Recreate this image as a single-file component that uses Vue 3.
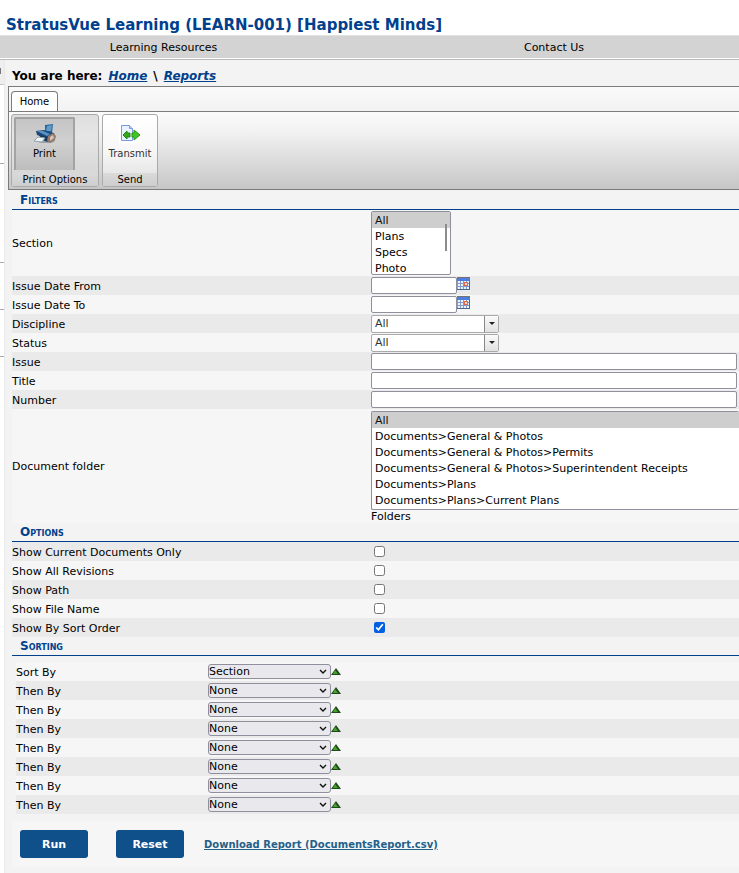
<template>
  <div class="page">
    <header class="top">
      <h1>StratusVue Learning (LEARN-001) [Happiest Minds]</h1>
    </header>
    <nav class="site-nav">
      <a href="#resources">Learning Resources</a>
      <a href="#contact">Contact Us</a>
    </nav>

    <div class="body">
      <aside class="side">
        <div class="side-head"></div>
        <div class="side-block first"></div>
        <div class="side-block second"></div>
        <div class="side-block third"></div>
        <div class="side-block fourth"></div>
      </aside>

      <main class="content">
        <div class="crumbs">
          <span>You are here:</span>
          <a href="#home">Home</a>
          <span>\</span>
          <a href="#reports">Reports</a>
        </div>

        <section class="ribbon">
          <div class="tabs">
            <button type="button" class="tab">Home</button>
          </div>
          <div class="groups">
            <div class="group print-group">
              <div class="group-body">
                <button type="button" class="tool active">
                  <svg width="24" height="22" viewBox="0 0 24 22" aria-hidden="true">
                    <ellipse cx="13" cy="18" rx="9" ry="2" fill="#9a9da1" />
                    <path d="M12 2 L20 1 L19 10 L12 9 Z" fill="#2a659f" />
                    <path d="M14 3 L19 2 L18 8 L13 8 Z" fill="#5f9bcb" />
                    <path d="M3 8 L11 7 L21 10 L22 13 L15 16 L4 12 Z" fill="#1d4a7a" />
                    <path d="M4 8 L10 8 L17 11 L14 13 Z" fill="#5b93c4" />
                    <path d="M6 12 L15 14 L15 19 L9 17 Z" fill="#16365c" />
                    <path d="M15 13 L20 10 L23 13 L22 17 L17 20 L14 18 Z" fill="#94796a" />
                    <path d="M17 14 L20 12 L21 15 L17 18 Z" fill="#d6c3b6" />
                    <path d="M5 14 L12 15 L9 19 L1 18 Z" fill="#edf7fa" stroke="#93a3ab" />
                  </svg>
                  <span>Print</span>
                </button>
              </div>
              <div class="group-title">Print Options</div>
            </div>
            <div class="group send-group">
              <div class="group-body">
                <button type="button" class="tool">
                  <svg width="24" height="22" viewBox="0 0 24 22" aria-hidden="true">
                    <rect x="1" y="0" width="22" height="21" fill="#fff" />
                    <path d="M3.5 2.5 H11.5 L14.5 5.5 V17.5 H3.5 Z" fill="#eaf1ff" stroke="#7a9ae0" />
                    <path d="M11.5 2.5 V5.5 H14.5" fill="#b7cbf5" stroke="#7a9ae0" />
                    <path d="M5 12 L9 8 V10 H12 V14 H9 V16 Z" fill="#35a81e" stroke="#1f8a12" />
                    <path d="M22 12 L16 7 V10 H14 V14 H16 V17 Z" fill="#45c428" stroke="#259516" />
                  </svg>
                  <span>Transmit</span>
                </button>
              </div>
              <div class="group-title">Send</div>
            </div>
          </div>
        </section>

        <form class="report" @submit.prevent @reset.prevent="resetForm">
          <h2>Filters</h2>
          <div class="row">
            <label for="section">Section</label>
            <div class="field list-field">
              <select id="section" v-model="form.section" class="list section-list" multiple size="4">
                <option v-for="s in sections" :key="s">{{ s }}</option>
              </select>
              <span class="thumb"></span>
            </div>
          </div>
          <div v-for="d in dates" :key="d.id" class="row">
            <label :for="d.id">{{ d.label }}</label>
            <div class="field">
              <input :id="d.id" v-model="form[d.id]" type="text" class="text date" />
              <button type="button" class="calendar" :aria-label="d.label">
                <svg width="13" height="13" viewBox="0 0 13 13" aria-hidden="true">
                  <rect width="13" height="13" fill="#7f9ccc" />
                  <rect width="13" height="1" fill="#77746f" />
                  <rect y="1" width="13" height="3" fill="#4c7ee0" />
                  <path d="M1 4h2v2h-2z M4 4h2v2h-2z M7 4h2v2h-2z M10 4h2v2h-2z M1 7h2v2h-2z M4 7h2v2h-2z M10 7h2v2h-2z M1 10h2v2h-2z M4 10h2v2h-2z M7 10h2v2h-2z M10 10h2v2h-2z" fill="#eef4fc" />
                  <rect x="7" y="5" width="4" height="4" fill="#e56a4c" />
                  <rect x="8" y="6" width="2" height="2" fill="#ffd6bd" />
                  <path d="M0 12.5 H13 M12.5 4 V13" stroke="#4a6690" />
                </svg>
              </button>
            </div>
          </div>
          <div v-for="c in combos" :key="c.id" class="row">
            <label :for="c.id">{{ c.label }}</label>
            <div class="field">
              <div class="combo">
                <select :id="c.id" v-model="form[c.id]">
                  <option>All</option>
                </select>
                <span class="combo-arrow"></span>
              </div>
            </div>
          </div>
          <div v-for="t in texts" :key="t.id" class="row">
            <label :for="t.id">{{ t.label }}</label>
            <div class="field">
              <input :id="t.id" v-model="form[t.id]" type="text" class="text wide" />
            </div>
          </div>
          <div class="row">
            <label for="folder">Document folder</label>
            <div class="field folder-field">
              <select id="folder" v-model="form.folder" class="list folder-list" multiple size="6">
                <option v-for="f in folders" :key="f">{{ f }}</option>
              </select>
              <span class="hint">Folders</span>
            </div>
          </div>

          <h2>Options</h2>
          <div v-for="o in options" :key="o.id" class="row">
            <label :for="o.id">{{ o.label }}</label>
            <div class="field">
              <input :id="o.id" v-model="o.checked" type="checkbox" class="check" />
            </div>
          </div>

          <h2>Sorting</h2>
          <div class="sorting">
            <div v-for="(s, i) in sorts" :key="i" class="row">
              <label :for="'sort' + i">{{ i === 0 ? 'Sort By' : 'Then By' }}</label>
              <div class="sort-field">
                <div class="sort-select">
                  <select :id="'sort' + i" v-model="sorts[i]">
                    <option>None</option>
                    <option>Section</option>
                  </select>
                  <svg width="8" height="6" viewBox="0 0 8 6" aria-hidden="true">
                    <path d="M1 1 L4 4 L7 1" fill="none" stroke="#111" stroke-width="1.4" />
                  </svg>
                </div>
                <button type="button" class="direction" aria-label="Ascending">
                  <svg width="10" height="7" viewBox="0 0 10 7" aria-hidden="true">
                    <path d="M5 0 L10 7 H0 Z" fill="#1f4a1c" />
                    <path d="M4 2 L7 6 H2 Z" fill="#45a32b" />
                  </svg>
                </button>
              </div>
            </div>
          </div>

          <div class="actions">
            <button type="submit">Run</button>
            <button type="reset">Reset</button>
            <a href="#download">Download Report (DocumentsReport.csv)</a>
          </div>
        </form>
      </main>
    </div>
  </div>
</template>

<script setup>
import { reactive, ref } from 'vue'

const sections = ['All', 'Plans', 'Specs', 'Photo']

const folders = [
  'All',
  'Documents>General & Photos',
  'Documents>General & Photos>Permits',
  'Documents>General & Photos>Superintendent Receipts',
  'Documents>Plans',
  'Documents>Plans>Current Plans'
]

const dates = [
  { id: 'issueFrom', label: 'Issue Date From' },
  { id: 'issueTo', label: 'Issue Date To' }
]

const combos = [
  { id: 'discipline', label: 'Discipline' },
  { id: 'status', label: 'Status' }
]

const texts = [
  { id: 'issue', label: 'Issue' },
  { id: 'title', label: 'Title' },
  { id: 'number', label: 'Number' }
]

const defaults = () => ({
  section: ['All'],
  issueFrom: '',
  issueTo: '',
  discipline: 'All',
  status: 'All',
  issue: '',
  title: '',
  number: '',
  folder: ['All']
})

const form = reactive(defaults())

const options = reactive([
  { id: 'currentOnly', label: 'Show Current Documents Only', checked: false },
  { id: 'allRevisions', label: 'Show All Revisions', checked: false },
  { id: 'showPath', label: 'Show Path', checked: false },
  { id: 'fileName', label: 'Show File Name', checked: false },
  { id: 'sortOrder', label: 'Show By Sort Order', checked: true }
])

const defaultSorts = () => ['Section', ...Array(7).fill('None')]
const sorts = ref(defaultSorts())

const resetForm = () => {
  Object.assign(form, defaults())
  options.forEach((o) => {
    o.checked = o.id === 'sortOrder'
  })
  sorts.value = defaultSorts()
}
</script>

<style>
body {
  margin: 0;
  background: #f3f3f3;
}
</style>

<style scoped>
.page {
  min-height: 100vh;
  display: flex;
  flex-direction: column;
  overflow: hidden;
  font-family: Verdana, "DejaVu Sans", sans-serif;
  font-size: 11px;
  color: #000;
}

.page * {
  box-sizing: border-box;
}

button,
input,
select {
  margin: 0;
  font-family: inherit;
  font-size: 11px;
  color: inherit;
}

.top {
  height: 35px;
  padding: 15px 6px 0;
  background: #fff;
}

h1 {
  margin: 0;
  font-size: 15px;
  line-height: 20px;
  color: #00408c;
  white-space: nowrap;
}

.site-nav {
  display: flex;
  height: 25px;
  padding-right: 44px;
  padding-left: 22px;
  border-top: 1px solid #e2e2e2;
  border-bottom: 1px solid #bbb;
  background: #d3d3d3;
  box-shadow: inset 0 -1px #fff;
}

.site-nav a {
  flex: 1;
  font-size: 11px;
  line-height: 23px;
  text-align: center;
  color: #000;
  text-decoration: none;
}

.site-nav a:first-child {
  flex: 0 0 283px;
}

.site-nav a:last-child {
  padding-left: 108px;
}

.body {
  flex: 1;
  display: flex;
}

.side {
  flex: 0 0 5px;
  border-right: 1px solid #e9e9e9;
  background: #fff;
}

.side-head {
  height: 25px;
  padding-top: 8px;
  border-bottom: 1px solid #c8c8c8;
  background: #eee;
}

.side-head::after {
  content: "";
  display: block;
  width: 1px;
  height: 6px;
  background: #777;
}

.side-block {
  border-bottom: 1px solid #aaa;
}

.side-block.first {
  height: 79px;
}

.side-block.second {
  height: 99px;
}

.side-block.third,
.side-block.fourth {
  height: 47px;
}

.content {
  flex: 1;
  min-width: 0;
  padding-left: 3px;
}

.crumbs {
  display: flex;
  gap: 6px;
  height: 26px;
  padding: 4px 4px 0;
  font-size: 12px;
  font-weight: bold;
  line-height: 24px;
}

.crumbs a {
  font-style: italic;
  color: #00408c;
}

.ribbon {
  border: 1px solid #7b7b7b;
  border-right: 0;
}

.tabs {
  display: flex;
  align-items: flex-end;
  height: 25px;
  padding-left: 2px;
  border-bottom: 1px solid #7b7b7b;
  background: linear-gradient(#fafafa, #f2f2f2);
}

.tab {
  width: 47px;
  height: 20px;
  padding: 0;
  border: 1px solid #7b7b7b;
  border-bottom: 0;
  border-radius: 4px 4px 0 0;
  background: #fff;
  font-size: 10px;
}

.groups {
  display: flex;
  gap: 3px;
  height: 77px;
  padding: 2px 2px;
  background: linear-gradient(#fbfbfb, #f2f2f2 25%, #c6c6c6);
}

.group {
  display: flex;
  flex-direction: column;
  height: 73px;
  border: 1px solid #aaa;
  border-radius: 3px;
}

.print-group {
  width: 88px;
  background: linear-gradient(#dedede, #e6e6e6 30%, #d2d2d2);
}

.send-group {
  width: 56px;
  background: linear-gradient(#fff, #f7f7f7 50%, #dedede);
}

.group-body {
  flex: 1;
  padding: 2px 2px 3px;
}

.group-title {
  height: 13px;
  background: linear-gradient(#dadada, #cecece);
  line-height: 13px;
  font-size: 10px;
  text-align: center;
}

.tool {
  display: flex;
  flex-direction: column;
  align-items: center;
  gap: 3px;
  width: 100%;
  height: 53px;
  padding: 6px 0 0;
  border: 0;
  background: none;
  color: #333;
  font-size: 10px;
}

.tool.active {
  width: 61px;
  padding-top: 4px;
  border: 2px solid #a3a3a3;
  border-bottom: 0;
  border-radius: 2px 2px 0 0;
  background: linear-gradient(#c4c4c4, #d1d1d1 45%, #bdbdbd);
  color: #000;
}

.report {
  padding-top: 1px;
  padding-left: 4px;
}

h2 {
  height: 19px;
  margin: 0;
  padding-left: 8px;
  border-bottom: 1px solid #00408c;
  font-size: 12px;
  font-variant: small-caps;
  line-height: 19px;
  color: #00408c;
}

.row {
  display: flex;
  align-items: center;
  min-height: 19px;
  background: #f6f6f6;
}

.row:nth-of-type(even) {
  background: #eaeaea;
}

.row > label {
  flex: 0 0 359px;
  padding-top: 1px;
}

.field {
  flex: 1;
  display: flex;
  min-width: 0;
}

.list {
  display: block;
  padding: 0;
  overflow: hidden;
  border: 1px solid #8f8f9d;
  border-radius: 2px;
  outline: 0;
  background: #fff;
  color: #000;
  font-size: 11px;
  scrollbar-width: none;
}

.list option {
  height: 16px;
  min-height: 16px;
  padding: 2px 3px 0;
}

.list-field {
  position: relative;
  padding: 1px 0;
}

.section-list {
  width: 80px;
  height: 64px;
}

.thumb {
  position: absolute;
  top: 14px;
  left: 74px;
  width: 2px;
  height: 27px;
  background: #8c8c8c;
}

.text {
  height: 17px;
  padding: 0 3px;
  border: 1px solid #8f8f9d;
  border-radius: 2px;
  background: #fff;
}

.date {
  width: 86px;
}

.wide {
  width: 100%;
  margin-right: 2px;
}

.calendar {
  width: 13px;
  height: 13px;
  padding: 0;
  border: 0;
  background: none;
}

.calendar svg {
  display: block;
}

.combo {
  position: relative;
  width: 128px;
  height: 18px;
}

.combo select {
  width: 100%;
  height: 18px;
  padding: 0 3px;
  border: 1px solid #aaa;
  border-radius: 2px;
  appearance: none;
  background: #fff;
  color: #333;
}

.combo-arrow {
  position: absolute;
  top: 1px;
  right: 1px;
  display: flex;
  align-items: center;
  justify-content: center;
  width: 14px;
  height: 16px;
  border-left: 1px solid #888;
  background: linear-gradient(#fafafa, #e2e2e2);
  pointer-events: none;
}

.combo-arrow::after {
  content: "";
  border: 3px solid transparent;
  border-top-color: #222;
  border-bottom: 0;
}

.folder-field {
  flex-direction: column;
  height: 114px;
  padding-top: 2px;
}

.folder-list {
  width: 100%;
  height: 99px;
  border-right: 0;
}

.hint {
  line-height: 13px;
}

.check {
  width: 11px;
  height: 11px;
  margin: 0 3px;
  accent-color: #0060df;
}

.sorting {
  padding: 6px 0 0 4px;
}

.sorting .row > label {
  flex-basis: 192px;
}

.sort-field {
  display: flex;
  align-items: center;
}

.sort-select {
  position: relative;
  width: 123px;
  height: 15px;
}

.sort-select select {
  display: block;
  width: 100%;
  height: 15px;
  padding: 0;
  border: 1px solid #8f8f9d;
  border-radius: 3px;
  appearance: none;
  background: #e9e9ed;
  line-height: 13px;
}

.sort-select svg {
  position: absolute;
  top: 5px;
  right: 4px;
  pointer-events: none;
}

.direction {
  display: flex;
  padding: 0;
  border: 0;
  background: none;
}

.actions {
  display: flex;
  align-items: center;
  height: 46px;
  margin-top: 7px;
  padding-left: 8px;
  background: #f6f6f6;
}

.actions button {
  width: 68px;
  height: 28px;
  margin-right: 28px;
  padding: 0;
  border: 0;
  border-radius: 3px;
  background: #0f4f8a;
  color: #fff;
  font-weight: bold;
}

.actions a {
  margin-left: -8px;
  color: #24618a;
  font-size: 10px;
  font-weight: bold;
}
</style>
